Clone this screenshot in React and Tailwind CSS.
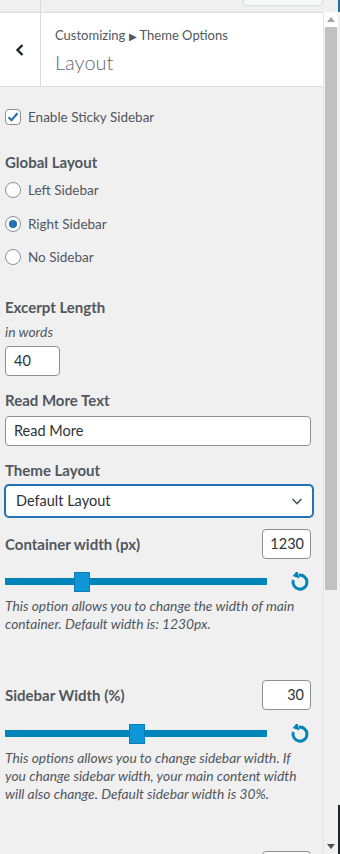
import React from "react";

const font = { fontFamily: "Lato, 'Noto Sans', sans-serif" };

function ResetIcon() {
  return (
    <svg width="20" height="20" viewBox="0 0 20 20" className="shrink-0">
      <path d="M9 3.2 A7 7 0 1 1 3.3 8" fill="none" stroke="#0085ba" strokeWidth="3" />
      <polygon points="8.5,-0.8 8.5,7.6 2.6,3.4" fill="#0085ba" transform="rotate(-15 5 3.4)" />
    </svg>
  );
}

function Slider({ left }) {
  return (
    <div className="flex items-center justify-between">
      <div className="relative h-[20px] w-[262px]">
        <div className="absolute left-0 right-0 top-[6px] h-[7px] bg-[#0085ba]" />
        <div
          className="absolute top-0 h-[20px] w-[16px] bg-[#0e96d9] border border-[#0a7fb5]"
          style={{ left }}
        />
      </div>
      <div className="mr-[1px]">
        <ResetIcon />
      </div>
    </div>
  );
}

function Radio({ checked, label, className = "" }) {
  return (
    <div className={"flex items-center h-[16px] " + className}>
      <span className="w-[16px] h-[16px] rounded-full border border-[#8c8f94] bg-white flex items-center justify-center shrink-0">
        {checked && <span className="w-[8px] h-[8px] rounded-full bg-[#2271b1]" />}
      </span>
      <span className="ml-[7px] text-[13.5px] text-[#50575e]">{label}</span>
    </div>
  );
}

export default function App() {
  return (
    <div className="w-[340px] h-[854px] overflow-hidden bg-[#f0f0f1] flex flex-col" style={font}>
      {/* top strip */}
      <div className="h-[12px] flex shrink-0 relative">
        <div className="w-[41px] border-r border-[#dcdcde]" />
        <div className="flex-1" />
        <div className="absolute left-[243px] top-0 w-[80px] h-[6px] bg-[#f6f7f7] border border-t-0 border-[#dcdcde] rounded-b-[3px]" />
        <div className="w-[2px] bg-[#2c6e9c]" />
      </div>
      <div className="flex flex-1 min-h-0">
        <div className="flex-1 min-w-0 flex flex-col">
          {/* header */}
          <div className="h-[75px] bg-white border-t border-b border-[#dcdcde] flex shrink-0">
            <div className="w-[41px] border-r border-[#dcdcde] flex items-center justify-center">
              <svg width="12" height="14" viewBox="0 0 12 14">
                <path d="M8.5 2 L3.5 7 L8.5 12" fill="none" stroke="#1d2327" strokeWidth="2.4" />
              </svg>
            </div>
            <div className="pl-[14px] pt-[13px]">
              <div className="text-[13px] leading-[18px] text-[#50575e]">
                Customizing <span className="text-[10px]">▶</span> Theme Options
              </div>
              <div className="text-[20px] leading-[26px] text-[#646970] font-light mt-[4px]">Layout</div>
            </div>
          </div>
          {/* content */}
          <div className="pl-[5px] pr-[12px] pt-[22px] text-[#50575e]">
            <div className="flex items-center h-[16px]">
              <span className="w-[16px] h-[16px] rounded-[4px] border border-[#8c8f94] bg-white flex items-center justify-center shrink-0">
                <svg width="14" height="14" viewBox="0 0 14 14">
                  <path d="M2.5 7.2 L5.5 10.2 L11.5 3.2" fill="none" stroke="#2271b1" strokeWidth="2.2" />
                </svg>
              </span>
              <span className="ml-[7px] text-[13.5px]">Enable Sticky Sidebar</span>
            </div>

            <div className="mt-[27px] text-[15px] leading-[20px] font-bold">Global Layout</div>
            <Radio className="mt-[10px]" label="Left Sidebar" />
            <Radio className="mt-[18px]" checked label="Right Sidebar" />
            <Radio className="mt-[17px]" label="No Sidebar" />

            <div className="mt-[32px] text-[15px] leading-[20px] font-bold">Excerpt Length</div>
            <div className="mt-[6px] text-[13.8px] leading-[18px] italic">in words</div>
            <div className="mt-[5px] w-[55px] h-[30px] bg-white border border-[#8c8f94] rounded-[4px] flex items-center px-[8px] text-[14.5px] text-[#2c3338]">40</div>

            <div className="mt-[14px] text-[15px] leading-[20px] font-bold">Read More Text</div>
            <div className="mt-[6px] h-[30px] bg-white border border-[#8c8f94] rounded-[4px] flex items-center px-[8px] text-[14.5px] text-[#2c3338]">Read More</div>

            <div className="mt-[14px] text-[15px] leading-[20px] font-bold">Theme Layout</div>
            <div className="mt-[5px] mr-[-2px] h-[32px] bg-white border border-[#2271b1] shadow-[0_0_0_1px_#2271b1] rounded-[4px] flex items-center justify-between pl-[10px] pr-[8px] text-[14.5px] text-[#2c3338]">
              <span>Default Layout</span>
              <svg width="14" height="14" viewBox="0 0 14 14">
                <path d="M2.5 5 L7 9.5 L11.5 5" fill="none" stroke="#50575e" strokeWidth="1.6" />
              </svg>
            </div>

            <div className="mt-[12px] flex items-center justify-between">
              <div className="text-[15px] leading-[20px] font-bold">Container width (px)</div>
              <div className="w-[49px] h-[30px] bg-white border border-[#8c8f94] rounded-[4px] flex items-center justify-end pr-[6px] text-[14.5px] text-[#2c3338]">1230</div>
            </div>
            <div className="mt-[13px]">
              <Slider left={69} />
            </div>
            <div className="mt-[5px] text-[13.8px] leading-[18px] italic pr-[4px]">
              This option allows you to change the width of main container. Default width is: 1230px.
            </div>

            <div className="mt-[47px] flex items-center justify-between">
              <div className="text-[15px] leading-[20px] font-bold">Sidebar Width (%)</div>
              <div className="w-[49px] h-[30px] bg-white border border-[#8c8f94] rounded-[4px] flex items-center justify-end pr-[6px] text-[14.5px] text-[#2c3338]">30</div>
            </div>
            <div className="mt-[14px]">
              <Slider left={124} />
            </div>
            <div className="mt-[5px] text-[13.8px] leading-[18px] italic pr-[4px]">
              This options allows you to change sidebar width. If you change sidebar width, your main content width will also change. Default sidebar width is 30%.
            </div>

            <div className="mt-[48px] flex justify-end">
              <div className="w-[49px] h-[30px] bg-white border border-[#8c8f94] rounded-[4px]" />
            </div>
          </div>
        </div>
        {/* scrollbar */}
        <div className="w-[17px] shrink-0 flex">
          <div className="w-[15px] flex flex-col bg-[#f1f1f1] border-l border-[#e6e6e6]">
            <div className="h-[15px] flex items-center justify-center bg-white">
              <svg width="8" height="5" viewBox="0 0 8 5"><polygon points="0,5 8,5 4,0" fill="#a3a3a3" /></svg>
            </div>
            <div className="mx-[1px] h-[563px] bg-[#c1c1c1]" />
            <div className="flex-1" />
            <div className="h-[15px] flex items-center justify-center">
              <svg width="8" height="5" viewBox="0 0 8 5"><polygon points="0,0 8,0 4,5" fill="#505050" /></svg>
            </div>
          </div>
          <div className="w-[2px] flex flex-col">
            <div className="h-[793px]" />
            <div className="flex-1 bg-[#1d2327]" />
          </div>
        </div>
      </div>
    </div>
  );
}
